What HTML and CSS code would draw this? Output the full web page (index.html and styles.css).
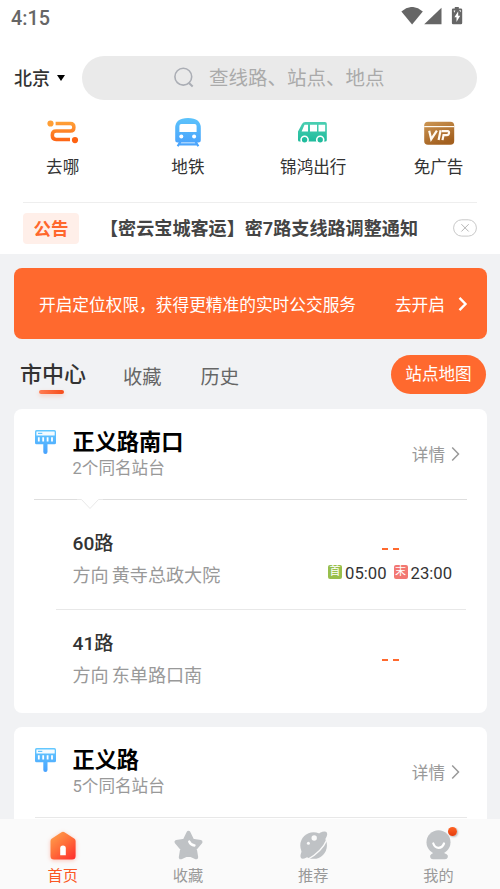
FILE: index.html
```html
<!DOCTYPE html>
<html lang="zh-CN">
<head>
<meta charset="utf-8">
<meta name="viewport" content="width=device-width, initial-scale=1">
<title>首页</title>
<link rel="stylesheet" href="styles.css">
</head>
<body>
<svg class="defs" width="0" height="0" aria-hidden="true">
  <defs>
    <linearGradient id="blue" x1="0" y1="0" x2="0" y2="1"><stop offset="0" stop-color="#5cc3fb"/><stop offset="1" stop-color="#4ba5fc"/></linearGradient>
    <linearGradient id="sign" gradientUnits="userSpaceOnUse" x1="0" y1="0" x2="0" y2="24"><stop offset="0" stop-color="#64c8ff"/><stop offset="1" stop-color="#48a2fe"/></linearGradient>
    <linearGradient id="route" gradientUnits="userSpaceOnUse" x1="0" y1="0" x2="0" y2="23"><stop offset="0" stop-color="#ffa63a"/><stop offset="1" stop-color="#fd5e12"/></linearGradient>
    <linearGradient id="green" x1="0" y1="0" x2="0" y2="1"><stop offset="0" stop-color="#4bcfb2"/><stop offset="1" stop-color="#1fbb9c"/></linearGradient>
    <linearGradient id="gold" x1="0" y1="0" x2=".5" y2="1"><stop offset="0" stop-color="#cc9653"/><stop offset="1" stop-color="#a3601f"/></linearGradient>
    <linearGradient id="home" x1=".1" y1="0" x2=".9" y2="1"><stop offset="0" stop-color="#ffa14c"/><stop offset=".5" stop-color="#ff6d39"/><stop offset="1" stop-color="#ff302d"/></linearGradient>
    <symbol id="stop-sign" viewBox="0 0 22 24">
      <path d="M8.3 12h4.2v10q0 2-2.1 2t-2.1-2z" fill="url(#sign)"/>
      <rect width="21" height="14.3" rx="1.6" fill="url(#sign)"/>
      <rect x="1.4" y="1.4" width="18.3" height="4.2" rx=".5" fill="#f4fbff"/>
      <path d="M3 3.4h4.3" stroke="#69c5fd" stroke-width="1.2"/>
      <path d="M3.8 7.3v4.2M8.2 7.3v4.2M12.6 7.3v4.2M17 7.3v4.2" stroke="#fff" stroke-width="1.8"/>
    </symbol>
  </defs>
</svg>
<div class="app">
  <header class="top">
    <div class="status">
      <span>4:15</span>
      <svg width="64" height="20" viewBox="0 0 64 20" fill="#666">
        <path d="M.4 4.4Q11-4.5 21.8 4.4L11.1 17.5z"/>
        <path d="M40.5.7v16.600H23.200z"/>
        <path d="M53.800 0h4v1.500h2.100q1.300 0 1.300 1.300v13.200q0 1.300-1.300 1.300h-7.700q-1.300 0-1.300-1.300V2.800q0-1.300 1.300-1.300h1.600z"/>
        <path d="M57.200 4.300l-3.800 6h2.100v4.700l3.700-6.200h-2zM52.600 3.500h1.800l-1.200 2.300zM58 3.300h1.800v2z" fill="#fff"/>
      </svg>
    </div>
    <div class="search-row">
      <div class="city">北京<i class="caret"></i></div>
      <div class="search">
        <svg width="22" height="22" viewBox="0 0 22 22" fill="none" stroke="#abaeb5" stroke-width="1.600"><circle cx="10.300" cy="9.700" r="8.400"/><path d="M15.900 15.900l3.800 3.500" stroke-width="2.100"/></svg>
        <span>查线路、站点、地点</span>
      </div>
    </div>
    <nav class="shortcuts">
      <a><svg width="32" height="30" viewBox="0 0 32 30"><g transform="translate(0 3.200)"><circle cx="3.500" cy="3.300" r="3.100" fill="#ff9e34"/><circle cx="28" cy="19.900" r="3.100" fill="#fe6211"/><path d="M8.600 3.300H23.400q3.500 0 3.500 3.800t-3.500 3.800H9.100q-3.800 0-3.800 4.200t3.800 4.200H23" fill="none" stroke="url(#route)" stroke-width="3.500"/></g></svg><span>去哪</span></a>
      <a><svg width="32" height="30" viewBox="0 0 32 30"><path d="M8.700 24L5.700 29.200M23.300 24l3 5.200M7 27.400h18" fill="none" stroke="#4ba5fc" stroke-width="2.200"/><path d="M3.200 11Q3.200 1 16 1t12.800 10v12q0 2.500-2.500 2.500H5.700q-2.500 0-2.500-2.500z" fill="url(#blue)"/><path d="M7.400 9q0-2 2-2h13.200q2 0 2 2v6H7.400z" fill="#fff"/><circle cx="9.300" cy="19.400" r="2" fill="#fff"/><circle cx="22.100" cy="19.400" r="2" fill="#fff"/></svg><span>地铁</span></a>
      <a><svg width="32" height="30" viewBox="0 0 32 30"><path d="M8.300 5H28q1.800 0 1.800 1.800V23q0 1.500-1.500 1.500H2.500Q1 24.500 1 23v-8.500L5 7q1-2 3.300-2z" fill="url(#green)"/><path d="M7.500 7.700H11V14.500H4.600zM13 7.700h7v6.800h-7zM21.500 7.700h6.700v6.800h-6.700z" fill="#fff"/><g fill="#20bc9d" stroke="#fff" stroke-width="1.600"><circle cx="7.600" cy="22.800" r="3.500"/><circle cx="23.200" cy="22.800" r="3.500"/></g></svg><span>锦鸿出行</span></a>
      <a><svg width="32" height="30" viewBox="0 0 32 30"><rect x="1.200" y="4.800" width="30" height="23" rx="3.800" fill="url(#gold)"/><path d="M1.200 9.600h30" stroke="#fffaf1" stroke-width="1.200"/><g fill="none" stroke="#fffaf2" stroke-width="2.200"><path d="M6.200 13.700l2 8.500 5.700-8.500M17.600 13.200l-2 9.800M18.800 14.200h5.800q1.700 0 1.400 1.900-.3 2-2.100 2H20.500l-1 5"/></g></svg><span>免广告</span></a>
    </nav>
    <div class="notice">
      <b class="tag">公告</b>
      <b class="headline">【密云宝城客运】密7路支线路调整通知</b>
      <svg class="close" width="24" height="18" viewBox="0 0 24 18" fill="none" stroke="#c8c8c8"><rect x=".6" y=".8" width="22.800" height="16.300" rx="8.100"/><path d="M8.400 5.200l7.300 7.300M15.700 5.200l-7.300 7.300" stroke="#b5b5b5"/></svg>
    </div>
  </header>

  <section class="banner">
    <span>开启定位权限，获得更精准的实时公交服务</span>
    <span class="go">去开启</span>
    <svg width="10" height="16" viewBox="0 0 10 16" fill="none" stroke="#fff" stroke-width="2.400"><path d="M1.500 1.800l6 6.200-6 6.200"/></svg>
  </section>

  <section class="tabs">
    <span class="tab current">市中心</span>
    <span class="tab">收藏</span>
    <span class="tab">历史</span>
    <a class="map">站点地图</a>
  </section>

  <section class="card">
    <div class="station">
      <svg width="22" height="24"><use href="#stop-sign"/></svg>
      <div class="names"><h2>正义路南口</h2><p>2个同名站台</p></div>
      <a class="more">详情<svg width="9" height="16" viewBox="0 0 9 16" fill="none" stroke="#999" stroke-width="1.500"><path d="M1.200 1.500L7.500 8l-6.300 6.500"/></svg></a>
    </div>
    <svg class="divider" width="433" height="12" viewBox="0 0 433 12" fill="none"><path d="M0 1.500h43M69 1.500h364" stroke="#dedede"/><path d="M43 1.500h4.500l8.500 9 8.500-9H69" stroke="#e9e9e9"/></svg>
    <div class="line first">
      <div class="route"><h3>60路</h3><p>方向<span>黄寺总政大院</span></p></div>
      <div class="arrival">
        <div class="dashes"><i></i><i></i></div>
        <div class="hours"><em class="start">首</em>05:00<em class="end">末</em>23:00</div>
      </div>
    </div>
    <div class="line second">
      <div class="route"><h3>41路</h3><p>方向<span>东单路口南</span></p></div>
      <div class="arrival"><div class="dashes"><i></i><i></i></div></div>
    </div>
  </section>

  <section class="card last">
    <div class="station">
      <svg width="22" height="24"><use href="#stop-sign"/></svg>
      <div class="names"><h2>正义路</h2><p>5个同名站台</p></div>
      <a class="more">详情<svg width="9" height="16" viewBox="0 0 9 16" fill="none" stroke="#999" stroke-width="1.500"><path d="M1.200 1.500L7.500 8l-6.300 6.500"/></svg></a>
    </div>
    <hr>
  </section>

  <nav class="tabbar">
    <a class="active"><svg class="glow" width="32" height="32" viewBox="0 0 32 32"><path d="M14.500 2.300q1.500-1 3 0l10 6.400q1.100.8 1.100 2.200v15q0 3.500-3.500 3.500H7q-3.500 0-3.500-3.500v-15q0-1.400 1.100-2.200z" fill="url(#home)"/><path d="M13.200 25.300v-7q0-2.800 2.800-2.800t2.800 2.800v7z" fill="#fff"/></svg><span>首页</span></a>
    <a><svg width="32" height="32" viewBox="0 0 32 32"><path d="M16.500 2.700l3.900 8 8.200 1.300-5.700 6.800 1.400 8.600-7.800-3.500-7.800 3.500 1.400-8.600-5.700-6.800 8.200-1.300z" fill="#bfc2c5" stroke="#bfc2c5" stroke-width="3.800" stroke-linejoin="round"/><path d="M17.200 11.500q1.300 3.600 5.300 4" fill="none" stroke="#fff" stroke-width="2.300" stroke-linecap="round"/></svg><span>收藏</span></a>
    <a><svg width="32" height="32" viewBox="0 0 32 32"><circle cx="16.600" cy="15.500" r="13.300" fill="#bfc2c5"/><path d="M23 2.700q5.500-2.200 7 .1 1.300 3.300-5 11-7 8.800-15.500 13.600Q4.800 30 3.800 27.500q-1-1.700 1-6.500z" fill="#bfc2c5"/><path d="M10.500 29.500Q25 21.500 30 9.500" fill="none" stroke="#fafafa" stroke-width="1.400"/><circle cx="17.200" cy="8" r="2.700" fill="#fafafa"/><circle cx="11.400" cy="13.300" r="1.500" fill="#fafafa"/></svg><span>推荐</span></a>
    <a><svg width="32" height="32" viewBox="0 0 32 32"><path d="M10 22.500h11q.5 1 2.300 1.500 2.300 1.300 1.500 3.300-.6 2-2.800 2H10q-2.300 0-2.800-2-.7-2 1.300-3.200 1.500-.6 1.500-1.600z" fill="#bfc2c5"/><circle cx="15.500" cy="12.300" r="12" fill="#bfc2c5"/><path d="M10.300 13.500q1.500 4.300 5.300 4.300t5.400-4.300" fill="none" stroke="#fff" stroke-width="2.200" stroke-linecap="round"/></svg><span>我的</span><i class="dot"></i></a>
  </nav>
</div>
</body>
</html>
```
FILE: styles.css
```css
* { box-sizing: border-box; }
body, h2, h3, p { margin: 0; }
svg { display: block; flex: none; }
.defs { position: absolute; }
i, em { font-style: normal; }
.app {
  width: 500px;
  height: 889px;
  overflow: hidden;
  display: flex;
  flex-direction: column;
  background: #f1f2f4;
  font-family: Roboto, "Noto Sans CJK SC", sans-serif;
  color: #333;
  white-space: nowrap;
}
.top { height: 254px; flex: none; background: #fff; }

.status {
  height: 56px;
  padding: 7px 35px 0 11px;
  display: flex;
  justify-content: space-between;
  font-size: 19.800px;
  line-height: 23px;
  font-weight: 500;
  color: #666;
}
.search-row { display: flex; height: 44px; }
.city {
  width: 82px;
  padding: 0 0 2px 14px;
  display: flex;
  align-items: center;
  font-size: 18px;
  font-weight: 500;
}
.caret {
  margin: 1px 0 0 7px;
  border: 4.500px solid transparent;
  border-top: 6px solid #000;
  border-bottom: 0;
}
.search {
  width: 395px;
  border-radius: 22px;
  background: #eaeaea;
  display: flex;
  align-items: center;
  padding-left: 91px;
  gap: 14px;
  font-size: 19.500px;
  color: #aaa;
}
.search span { padding-bottom: 3px; }

.shortcuts { display: flex; height: 102px; padding-top: 17px; }
.shortcuts a {
  width: 125.300px;
  flex: none;
  display: flex;
  flex-direction: column;
  align-items: center;
  font-size: 16.600px;
  line-height: 24px;
  gap: 10px;
}
.shortcuts svg { margin-bottom: -1px; }
.notice {
  margin-left: 23px;
  width: 454px;
  height: 52px;
  border-top: 1px solid #eee;
  display: flex;
  align-items: center;
}
.tag {
  width: 56px;
  height: 31px;
  margin-bottom: 1px;
  border-radius: 4px;
  background: #ffefe9;
  color: #ff672c;
  font-size: 17.500px;
  line-height: 32px;
  text-align: center;
}
.headline { margin-left: 21px; width: 353px; padding-bottom: 3px; font-size: 18.100px; color: #444; }
.close { margin-bottom: 1px; }

.banner {
  flex: none;
  height: 71px;
  width: 473px;
  margin: 14px 0 0 14px;
  padding: 0 19px 0 25px;
  border-radius: 8px;
  background: #ff692e;
  color: #fff;
  display: flex;
  align-items: center;
  font-size: 16.700px;
}
.go { margin: 0 13px 0 auto; }

.tabs { flex: none; display: flex; height: 70px; padding: 16px 14px 0 20px; }
.tab { margin-top: 9px; font-size: 19.300px; line-height: 28px; color: #666; }
.tab + .tab { margin-left: 39px; }
.tab.current + .tab { margin-left: 37px; }
.tab.current { margin-top: 4px; font-size: 22px; line-height: 31px; font-weight: 500; color: #333; }
.current::after {
  content: "";
  display: block;
  width: 25px;
  height: 4px;
  margin-left: 19px;
  border-radius: 2px;
  background: linear-gradient(90deg, #ff7d53, #f54c1a);
  box-shadow: 0 2px 4px #ff692e40;
}
.map {
  margin-left: auto;
  width: 95px;
  height: 39px;
  border-radius: 20px;
  background: #ff692e;
  color: #fff;
  font-size: 16.600px;
  line-height: 40px;
  text-align: center;
}

.card {
  flex: none;
  width: 473px;
  height: 303.500px;
  margin-left: 14px;
  border-radius: 8px;
  background: #fff;
}
.last { margin-top: 14px; }
.station { display: flex; height: 90px; padding: 21px 27px 0 21px; }
.names { margin-left: 15.500px; margin-top: -3px; }
h2 { font-size: 22.200px; line-height: 30px; color: #000; }
.names p { font-size: 16.600px; line-height: 24px; color: #999; }
.more {
  display: flex;
  align-items: center;
  height: 24px;
  margin: 12px 0 0 auto;
  gap: 6px;
  font-size: 16.600px;
  color: #999;
}
.divider { margin: -1px 0 0 20px; }
.line { display: flex; justify-content: space-between; margin-left: 42px; width: 410px; padding-left: 16.500px; }
.first { height: 100px; padding-top: 20px; border-bottom: 1px solid #e8e8e8; }
.second { padding-top: 20px; }
h3 { font-size: 19.200px; line-height: 28px; font-weight: 500; }
.route p { font-size: 18.100px; line-height: 26px; margin-top: 5px; color: #999; }
.route p span { margin-left: 3px; }
.arrival { width: 139px; padding-top: 18px; }
.dashes { display: flex; gap: 5px; margin-left: 55px; }
.dashes i { width: 6px; height: 2px; background: #ff692e; }
.second .dashes { margin-top: 11px; }
.hours { display: flex; align-items: center; margin-top: 12px; height: 22px; font-size: 16.700px; }
.hours em {
  width: 14px;
  height: 14px;
  margin: 0 3px 2px 1px;
  border-radius: 2px;
  font-size: 11px;
  line-height: 14px;
  text-align: center;
  color: #fff;
}
.hours .start { background: #98bf4c; }
.hours .end { margin-left: 7px; background: #f27872; }
hr { width: 432px; margin: 0 0 0 21px; border: 0; border-top: 1px solid #e8e8e8; }

.tabbar {
  position: fixed;
  top: 819px;
  left: 0;
  width: 500px;
  height: 70px;
  background: #fafafa;
  display: flex;
}
.tabbar a {
  position: relative;
  width: 125.300px;
  flex: none;
  padding-top: 11px;
  display: flex;
  flex-direction: column;
  align-items: center;
  font-size: 15.200px;
  line-height: 22px;
  gap: 3px;
  color: #999;
}
.tabbar .active { color: #fa5723; }
.glow { filter: drop-shadow(0 1px 2px #ff502e55); }
.dot {
  position: absolute;
  left: 72px;
  top: 8px;
  width: 9px;
  height: 9px;
  border-radius: 50%;
  background: linear-gradient(#ff6424, #e43c0e);
  box-shadow: 1px 1px 2px #0004;
}
```
